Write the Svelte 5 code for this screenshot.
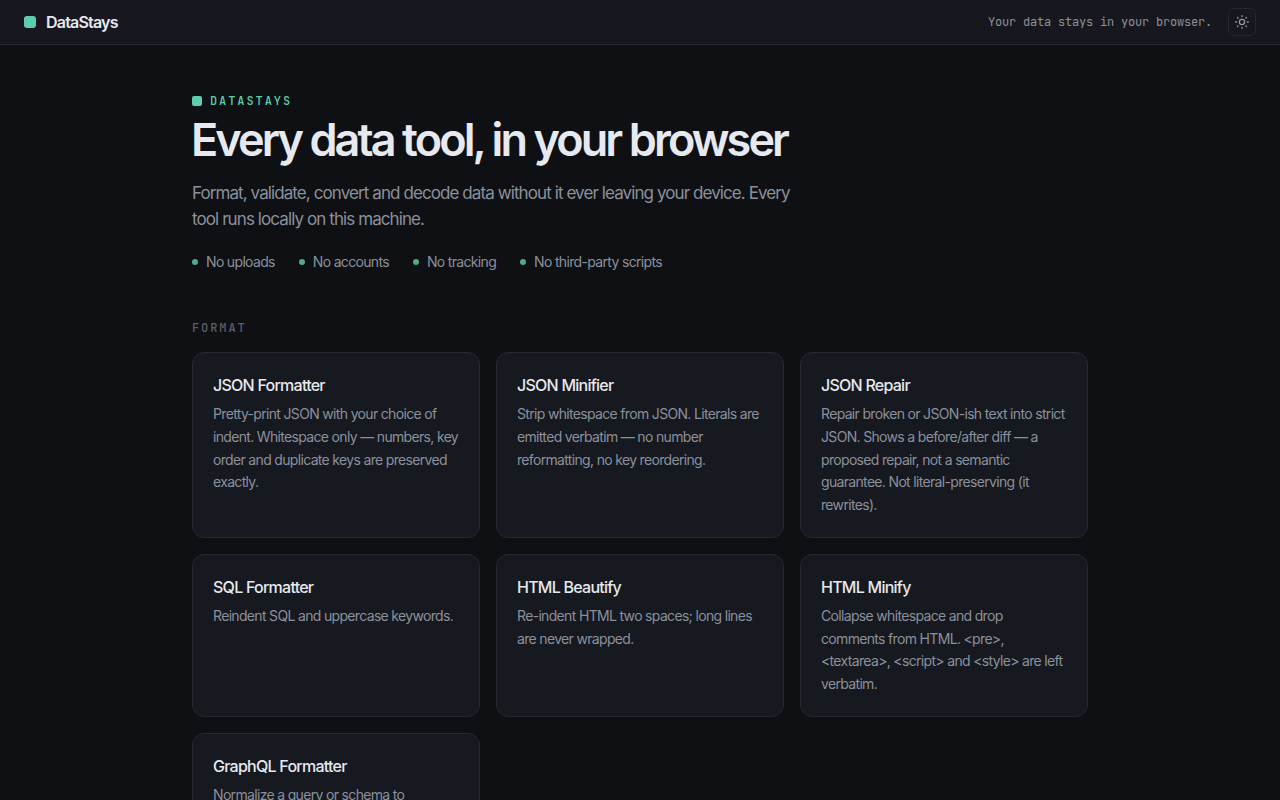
<script lang="ts">
  interface Tool {
    name: string;
    description: string;
  }

  const promises = ['No uploads', 'No accounts', 'No tracking', 'No third-party scripts'];

  const tools: Tool[] = [
    {
      name: 'JSON Formatter',
      description:
        'Pretty-print JSON with your choice of indent. Whitespace only — numbers, key order and duplicate keys are preserved exactly.'
    },
    {
      name: 'JSON Minifier',
      description:
        'Strip whitespace from JSON. Literals are emitted verbatim — no number reformatting, no key reordering.'
    },
    {
      name: 'JSON Repair',
      description:
        'Repair broken or JSON-ish text into strict JSON. Shows a before/after diff — a proposed repair, not a semantic guarantee. Not literal-preserving (it rewrites).'
    },
    { name: 'SQL Formatter', description: 'Reindent SQL and uppercase keywords.' },
    { name: 'HTML Beautify', description: 'Re-indent HTML two spaces; long lines are never wrapped.' },
    {
      name: 'HTML Minify',
      description:
        'Collapse whitespace and drop comments from HTML. <pre>, <textarea>, <script> and <style> are left verbatim.'
    },
    { name: 'GraphQL Formatter', description: 'Normalize a query or schema to' }
  ];
</script>

<div class="page">
  <header class="topbar">
    <a class="brand" href="/">
      <span class="mark"></span>
      DataStays
    </a>
    <div class="topbar-right">
      <span class="tagline">Your data stays in your browser.</span>
      <button class="theme-toggle" aria-label="Toggle theme">
        <svg viewBox="0 0 16 16" width="16" height="16" fill="none" stroke="currentColor" stroke-width="1.3" stroke-linecap="round">
          <circle cx="8" cy="8" r="2.6" />
          <path d="M8 1.7v.9M8 13.4v.9M1.7 8h.9M13.4 8h.9M3.5 3.5l.6.6M11.9 11.9l.6.6M12.5 3.5l-.6.6M4.1 11.9l-.6.6" />
        </svg>
      </button>
    </div>
  </header>

  <main>
    <section class="hero">
      <p class="eyebrow"><span class="mark small"></span>DATASTAYS</p>
      <h1>Every data tool, in your browser</h1>
      <p class="lede">
        Format, validate, convert and decode data without it ever leaving your device. Every tool runs
        locally on this machine.
      </p>
      <ul class="promises">
        {#each promises as promise}
          <li>{promise}</li>
        {/each}
      </ul>
    </section>

    <section>
      <h2>FORMAT</h2>
      <div class="grid">
        {#each tools as tool}
          <a class="card" href="/">
            <h3>{tool.name}</h3>
            <p>{tool.description}</p>
          </a>
        {/each}
      </div>
    </section>
  </main>
</div>

<style>
  :global(body) {
    background: #0e1013;
  }

  .page {
    height: 100vh;
    overflow: hidden;
    background: #0e1013;
    color: #e6e9ef;
    font-family: Inter, sans-serif;
    font-size: 14px;
    letter-spacing: -0.67px;
  }

  .topbar {
    display: flex;
    align-items: center;
    justify-content: space-between;
    box-sizing: border-box;
    height: 45px;
    padding: 0 24px;
    background: #17181f;
    border-bottom: 1px solid #282b30;
  }

  .brand {
    display: flex;
    align-items: center;
    gap: 10px;
    color: #e6e9ef;
    font-size: 16px;
    font-weight: 600;
    letter-spacing: -0.8px;
    text-decoration: none;
  }

  .mark {
    width: 12px;
    height: 12px;
    border-radius: 3px;
    background: #5eccae;
  }

  .mark.small {
    width: 10px;
    height: 10px;
    border-radius: 2px;
  }

  .topbar-right {
    display: flex;
    align-items: center;
    gap: 16px;
  }

  .tagline {
    color: #8b909c;
    font-family: 'JetBrains Mono', 'DejaVu Sans Mono', monospace;
    font-size: 12px;
    letter-spacing: -0.2px;
  }

  .theme-toggle {
    display: grid;
    place-items: center;
    width: 28px;
    height: 28px;
    padding: 0;
    background: none;
    border: 1px solid #25282e;
    border-radius: 6px;
    color: #9096a2;
  }

  main {
    width: 896px;
    margin: 0 auto;
    padding-top: 48px;
  }

  .eyebrow {
    display: flex;
    align-items: center;
    gap: 8px;
    margin: 0;
    color: #5eccae;
    font-family: 'JetBrains Mono', 'DejaVu Sans Mono', monospace;
    font-size: 12px;
    font-weight: 500;
    line-height: 16px;
    letter-spacing: 0.16em;
  }

  h1 {
    margin: 6px 0 0 -1px;
    font-size: 45px;
    font-weight: 600;
    line-height: 50px;
    letter-spacing: -2.9px;
  }

  .lede {
    max-width: 608px;
    margin: 15px 0 0;
    color: #8b909c;
    font-size: 17px;
    line-height: 26px;
    letter-spacing: -0.91px;
  }

  .promises {
    display: flex;
    gap: 24px;
    margin: 19px 0 0;
    padding: 0;
    color: #8b909c;
    line-height: 22px;
    list-style: none;
  }

  .promises li {
    display: flex;
    align-items: center;
    gap: 8px;
  }

  .promises li::before {
    content: '';
    width: 6px;
    height: 6px;
    border-radius: 50%;
    background: #51ab8b;
  }

  h2 {
    margin: 47px 0 16px;
    color: #5b606b;
    font-family: 'JetBrains Mono', 'DejaVu Sans Mono', monospace;
    font-size: 12px;
    font-weight: 500;
    line-height: 16px;
    letter-spacing: 0.16em;
  }

  .grid {
    display: grid;
    grid-template-columns: repeat(3, 1fr);
    gap: 16px;
  }

  .card {
    padding: 20px;
    background: #16191f;
    border: 1px solid #25282e;
    border-radius: 12px;
    color: inherit;
    text-decoration: none;
  }

  h3 {
    margin: 0 0 6px;
    font-size: 16px;
    font-weight: 500;
    line-height: 24px;
    letter-spacing: -0.75px;
  }

  .card p {
    margin: 0;
    color: #8b909c;
    line-height: 22.75px;
  }
</style>
